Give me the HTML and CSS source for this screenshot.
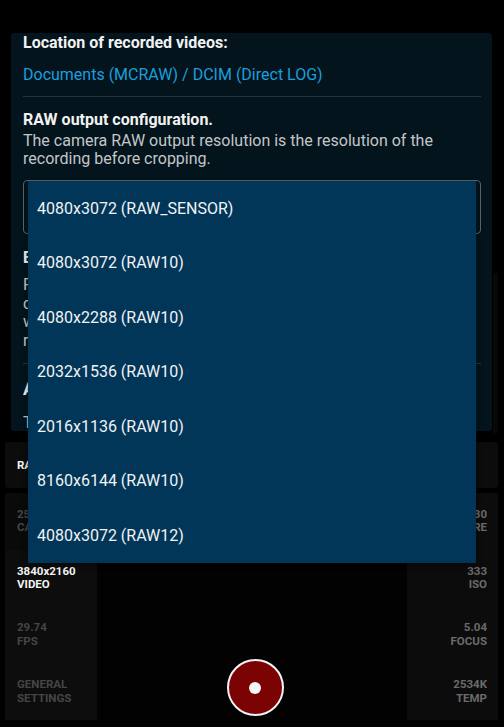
FILE: index.html
```html
<!DOCTYPE html>
<html>
<head>
<meta charset="utf-8">
<link rel="stylesheet" href="styles.css">
</head>
<body>
<div class="camera">
  <div class="strip"><span class="label active">RAW VIDEO</span></div>
  <div class="controls">
    <div class="col col-left">
      <div class="cell dim"><span>25.0</span><span>CAMERA</span></div>
      <div class="cell sel active"><span>3840x2160</span><span>VIDEO</span></div>
      <div class="cell dim"><span>29.74</span><span>FPS</span></div>
      <div class="cell dim"><span>GENERAL</span><span>SETTINGS</span></div>
    </div>
    <div class="mid">
      <div class="rec"><div class="rec-dot"></div></div>
    </div>
    <div class="col col-right">
      <div class="cell"><span>1/30</span><span>EXPOSURE</span></div>
      <div class="cell"><span>333</span><span>ISO</span></div>
      <div class="cell"><span>5.04</span><span>FOCUS</span></div>
      <div class="cell"><span>2534K</span><span>TEMP</span></div>
    </div>
  </div>
</div>
<div class="edge"></div>

<div class="panel">
  <div class="title">Location of recorded videos:</div>
  <div class="link">Documents (MCRAW) / DCIM (Direct LOG)</div>
  <div class="divider d1"></div>
  <div class="title t2">RAW output configuration.</div>
  <div class="desc d-first">The camera RAW output resolution is the resolution of the recording before cropping.</div>
  <div class="select"></div>
  <div class="title t3">Enable cropping</div>
  <div class="desc d-second">For cropping the recording, choose<br>crop size. When enabled the sensor image<br>will be cropped before it is recorded,<br>reducing the output resolution.</div>
  <div class="divider d2"></div>
  <div class="title big">Advanced</div>
  <div class="desc d-third">These settings are experimental.</div>
</div>

<ul class="dropdown">
  <li>4080x3072 (RAW_SENSOR)</li>
  <li>4080x3072 (RAW10)</li>
  <li>4080x2288 (RAW10)</li>
  <li>2032x1536 (RAW10)</li>
  <li>2016x1136 (RAW10)</li>
  <li>8160x6144 (RAW10)</li>
  <li>4080x3072 (RAW12)</li>
</ul>
</body>
</html>
```

FILE: styles.css
```css
* { box-sizing: border-box; }
html, body {
  margin: 0;
  padding: 0;
  background: #000;
  width: 504px;
  height: 727px;
  overflow: hidden;
  font-family: Roboto, "Noto Sans", sans-serif;
}

/* camera layer */
.camera {
  height: 727px;
  display: flex;
  flex-direction: column;
  justify-content: flex-end;
  padding: 0 6px 7px 5px;
}
.strip {
  height: 46px;
  margin-bottom: 5px;
  background: #0c0c0c;
  border-radius: 3px;
  display: flex;
  align-items: center;
  padding-left: 12px;
}
.label {
  font-size: 11.5px;
  font-weight: 700;
}
.active { color: #f4f4f4; }
.controls {
  height: 227px;
  display: flex;
}
.col {
  display: flex;
  flex-direction: column;
}
.col-left { width: 92px; background: #0d0d0d; }
.col-right { width: 91px; background: #0c0c0c; }
.cell {
  height: 56.75px;
  display: flex;
  flex-direction: column;
  justify-content: center;
  font-size: 11.5px;
  font-weight: 700;
  line-height: 13.5px;
  color: #6a6a6a;
}
.col-left .cell { padding-left: 12px; }
.col-left .cell.dim { color: #454545; }
.col-left .cell:first-child { background: #0a0a0a; }
.col-left .cell.sel { color: #f4f4f4; }
.col-right .cell { align-items: flex-end; padding-right: 11px; }
.mid {
  flex: 1;
  display: flex;
  align-items: flex-end;
  justify-content: center;
  padding: 0 0 4px 6px;
  background: #020202;
}
.rec {
  width: 57px;
  height: 57px;
  border-radius: 50%;
  border: 2.5px solid #f4f4f4;
  background: #7c0303;
  display: flex;
  align-items: center;
  justify-content: center;
}
.rec-dot {
  width: 12px;
  height: 12px;
  border-radius: 50%;
  background: #f6f6f6;
}
.edge {
  position: absolute;
  left: 493px;
  top: 273px;
  width: 5px;
  height: 160px;
  background: #080808;
}

/* settings panel overlay */
.panel {
  position: absolute;
  left: 11px;
  top: 33px;
  width: 481px;
  height: 398px;
  background: #03141c;
  border-radius: 3px;
  overflow: hidden;
  padding: 0 11px 0 12px;
}
.title {
  font-size: 16px;
  font-weight: 700;
  line-height: 19px;
  color: #f2f2f2;
}
.link {
  margin-top: 12.5px;
  font-size: 16px;
  line-height: 19px;
  color: #1c9fdd;
}
.divider {
  height: 1px;
  background: #27333c;
}
.d1 { margin-top: 12px; }
.t2 { margin-top: 13px; }
.desc {
  font-size: 16px;
  line-height: 18.7px;
  color: #c3c6c8;
}
.d-first { margin-top: 3px; }
.select {
  margin-top: 11.5px;
  height: 54px;
  border: 1px solid #56646c;
  border-radius: 4px;
}
.t3 { margin-top: 13.5px; }
.d-second { margin-top: 9px; }
.d2 { margin-top: 12px; }
.big { margin-top: 14px; font-size: 18px; line-height: 21px; }
.d-third { margin-top: 15px; }

/* dropdown overlay */
.dropdown {
  position: absolute;
  left: 28px;
  top: 181px;
  width: 448px;
  margin: 0;
  padding: 0;
  list-style: none;
  background: #013659;
  box-shadow: 0 2px 6px rgba(0,0,0,0.4);
}
.dropdown li {
  height: 54.5px;
  display: flex;
  align-items: center;
  padding-left: 9px;
  font-size: 16px;
  color: #f0f2f4;
}
```
